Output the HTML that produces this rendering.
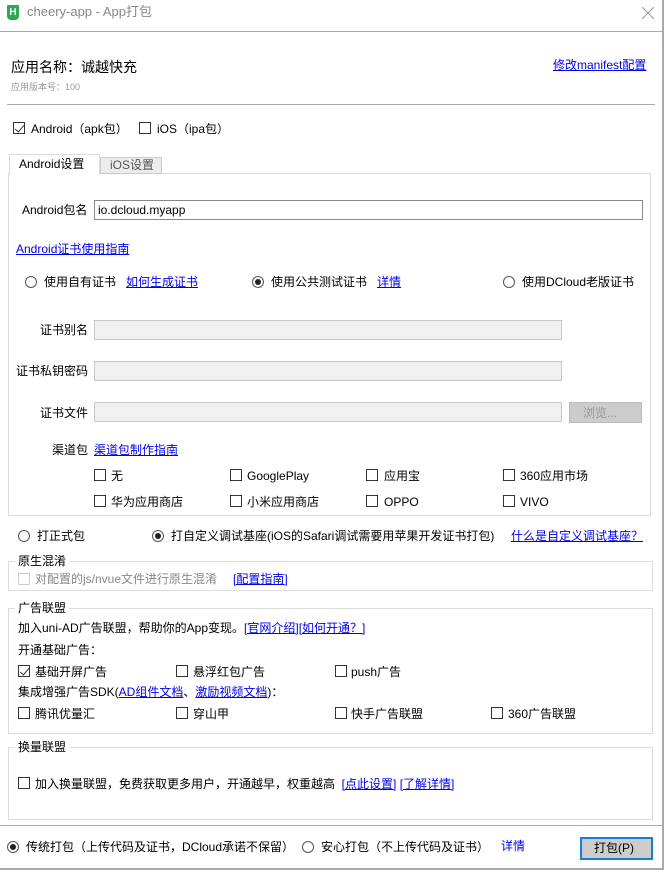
<!DOCTYPE html>
<html><head><meta charset="utf-8"><style>
*{margin:0;padding:0;box-sizing:border-box}
body{width:664px;height:870px;background:#fff;position:relative;overflow:hidden;font-family:"Liberation Sans","Noto Sans CJK SC",sans-serif;font-size:12px;color:#000}
.a{position:absolute;white-space:nowrap;line-height:14px}
.l{color:#0000ee;text-decoration:underline}
.cb{position:absolute;width:12px;height:12px;border:1px solid #333;background:#fff}
.rd{position:absolute;width:12px;height:12px;border:1px solid #555;border-radius:50%;background:#fff}
.rd.on::after{content:"";position:absolute;left:2px;top:2px;width:6px;height:6px;border-radius:50%;background:#222}
.inp{position:absolute;height:20px;border:1px solid #c8c8c8;background:#f0f0f0}
.fs{position:absolute;border:1px solid #dcdcdc}
.lg{position:absolute;background:#fff;padding:0 3px;line-height:14px}
.ck::after{content:"";position:absolute;left:3px;top:0px;width:4px;height:8px;border:solid #333;border-width:0 1px 1px 0;transform:rotate(40deg)}
</style></head><body>
<div style="position:absolute;left:0;top:0;width:664px;height:32px;border-bottom:1px solid #aaa"></div>
<div style="position:absolute;right:0;top:0;width:2px;height:870px;background:#aaa"></div>
<div style="position:absolute;left:7px;top:5px;width:12px;height:15px;background:#2fa84f;border-radius:1px 1px 4px 4px;color:#fff;font-size:10px;font-weight:bold;text-align:center;line-height:15px">H</div>
<div class="a" style="left:27px;top:5px;font-size:13px;color:#888">cheery-app - App打包</div>
<svg style="position:absolute;left:642px;top:7px" width="12" height="12"><path d="M0 0L12 12M12 0L0 12" stroke="#999" stroke-width="1"/></svg>

<div class="a" style="left:11px;top:59px;font-size:14px;line-height:16px">应用名称：诚越快充</div>
<div class="a" style="left:11px;top:80px;font-size:9px;color:#999">应用版本号：100</div>
<div class="a l" style="left:553px;top:58px">修改manifest配置</div>
<div style="position:absolute;left:7px;top:104px;width:648px;height:1px;background:#aaa"></div>

<div class="cb ck" style="left:13px;top:122px"></div>
<div class="a" style="left:31px;top:122px">Android（apk包）</div>
<div class="cb" style="left:139px;top:122px"></div>
<div class="a" style="left:157px;top:122px">iOS（ipa包）</div>

<div style="position:absolute;left:8px;top:173px;width:643px;height:343px;border:1px solid #dcdcdc"></div>
<div style="position:absolute;left:9px;top:154px;width:91px;height:21px;border:1px solid #dcdcdc;border-bottom:none;background:#fff"></div>
<div class="a" style="left:19px;top:157px">Android设置</div>
<div style="position:absolute;left:100px;top:157px;width:62px;height:17px;border:1px solid #ccc;background:#ececec"></div>
<div class="a" style="left:110px;top:158px;color:#555">iOS设置</div>

<div class="a" style="left:22px;top:203px">Android包名</div>
<div style="position:absolute;left:94px;top:200px;width:549px;height:20px;border:1px solid #888;background:#fff"></div>
<div class="a" style="left:98px;top:203px">io.dcloud.myapp</div>
<div class="a l" style="left:16px;top:242px">Android证书使用指南</div>

<div class="rd" style="left:25px;top:276px"></div>
<div class="a" style="left:44px;top:275px">使用自有证书</div>
<div class="a l" style="left:126px;top:275px">如何生成证书</div>
<div class="rd on" style="left:252px;top:276px"></div>
<div class="a" style="left:271px;top:275px">使用公共测试证书</div>
<div class="a l" style="left:377px;top:275px">详情</div>
<div class="rd" style="left:503px;top:276px"></div>
<div class="a" style="left:522px;top:275px">使用DCloud老版证书</div>

<div class="a" style="left:40px;top:323px">证书别名</div>
<div class="inp" style="left:94px;top:320px;width:468px"></div>
<div class="a" style="left:16px;top:364px">证书私钥密码</div>
<div class="inp" style="left:94px;top:361px;width:468px"></div>
<div class="a" style="left:40px;top:406px">证书文件</div>
<div class="inp" style="left:94px;top:402px;width:468px"></div>
<div style="position:absolute;left:569px;top:402px;width:73px;height:21px;background:#ccc;border:1px solid #bbb"></div>
<div class="a" style="left:583px;top:406px;color:#999">浏览...</div>

<div class="a" style="left:52px;top:443px">渠道包</div>
<div class="a l" style="left:94px;top:443px">渠道包制作指南</div>
<div class="cb" style="left:94px;top:469px"></div><div class="a" style="left:111px;top:469px">无</div>
<div class="cb" style="left:230px;top:469px"></div><div class="a" style="left:247px;top:469px">GooglePlay</div>
<div class="cb" style="left:366px;top:469px"></div><div class="a" style="left:384px;top:469px">应用宝</div>
<div class="cb" style="left:503px;top:469px"></div><div class="a" style="left:520px;top:469px">360应用市场</div>
<div class="cb" style="left:94px;top:495px"></div><div class="a" style="left:111px;top:495px">华为应用商店</div>
<div class="cb" style="left:230px;top:495px"></div><div class="a" style="left:247px;top:495px">小米应用商店</div>
<div class="cb" style="left:366px;top:495px"></div><div class="a" style="left:384px;top:495px">OPPO</div>
<div class="cb" style="left:503px;top:495px"></div><div class="a" style="left:520px;top:495px">VIVO</div>

<div class="rd" style="left:18px;top:530px"></div>
<div class="a" style="left:37px;top:529px">打正式包</div>
<div class="rd on" style="left:152px;top:530px"></div>
<div class="a" style="left:171px;top:529px">打自定义调试基座(iOS的Safari调试需要用苹果开发证书打包)</div>
<div class="a l" style="left:511px;top:529px">什么是自定义调试基座？</div>

<div class="fs" style="left:8px;top:561px;width:645px;height:30px"></div>
<div class="lg" style="left:15px;top:554px">原生混淆</div>
<div class="cb" style="left:18px;top:573px;border-color:#ccc"></div>
<div class="a" style="left:35px;top:572px;color:#888">对配置的js/nvue文件进行原生混淆</div>
<div class="a l" style="left:233px;top:572px">[配置指南]</div>

<div class="fs" style="left:8px;top:608px;width:645px;height:126px"></div>
<div class="lg" style="left:15px;top:601px">广告联盟</div>
<div class="a" style="left:18px;top:621px">加入uni-AD广告联盟，帮助你的App变现。<span class="l">[官网介绍][如何开通？]</span></div>
<div class="a" style="left:18px;top:643px">开通基础广告：</div>
<div class="cb ck" style="left:18px;top:665px"></div><div class="a" style="left:35px;top:665px">基础开屏广告</div>
<div class="cb" style="left:176px;top:665px"></div><div class="a" style="left:193px;top:665px">悬浮红包广告</div>
<div class="cb" style="left:335px;top:665px"></div><div class="a" style="left:351px;top:665px">push广告</div>
<div class="a" style="left:18px;top:685px">集成增强广告SDK(<span class="l">AD组件文档</span>、<span class="l">激励视频文档</span>)：</div>
<div class="cb" style="left:18px;top:707px"></div><div class="a" style="left:35px;top:707px">腾讯优量汇</div>
<div class="cb" style="left:176px;top:707px"></div><div class="a" style="left:193px;top:707px">穿山甲</div>
<div class="cb" style="left:335px;top:707px"></div><div class="a" style="left:351px;top:707px">快手广告联盟</div>
<div class="cb" style="left:491px;top:707px"></div><div class="a" style="left:508px;top:707px">360广告联盟</div>

<div class="fs" style="left:8px;top:747px;width:645px;height:73px"></div>
<div class="lg" style="left:15px;top:740px">换量联盟</div>
<div class="cb" style="left:18px;top:777px"></div>
<div class="a" style="left:35px;top:777px">加入换量联盟，免费获取更多用户，开通越早，权重越高 &nbsp;<span class="l">[点此设置]</span> <span class="l">[了解详情]</span></div>

<div style="position:absolute;left:0;top:825px;width:662px;height:1px;background:#aaa"></div>
<div class="rd on" style="left:7px;top:841px"></div>
<div class="a" style="left:26px;top:840px">传统打包（上传代码及证书，DCloud承诺不保留）</div>
<div class="rd" style="left:302px;top:841px"></div>
<div class="a" style="left:321px;top:840px">安心打包（不上传代码及证书）</div>
<div class="a l" style="left:501px;top:839px;text-decoration:none">详情</div>
<div style="position:absolute;left:580px;top:837px;width:73px;height:23px;background:#ccc;border:2px solid #1a7fd4"></div>
<div class="a" style="left:594px;top:841px">打包(P)</div>
<div style="position:absolute;left:0;top:868px;width:664px;height:2px;background:#aaa"></div>
</body></html>
